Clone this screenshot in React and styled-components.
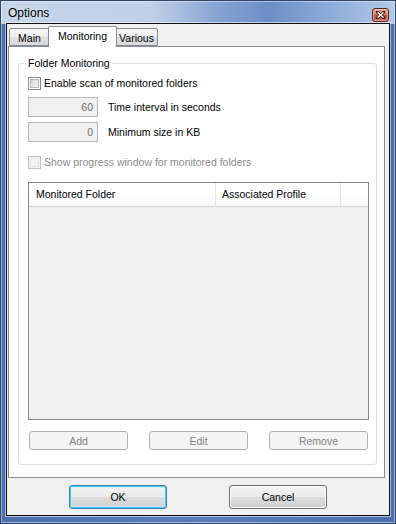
import React from 'react';
import styled, { createGlobalStyle } from 'styled-components';

const GlobalStyle = createGlobalStyle`
  html, body { margin: 0; padding: 0; background: #ffffff; }
  body { font-family: "Liberation Sans", Arial, sans-serif; font-size: 10.5px; color: #000; }
  *, *::before, *::after { box-sizing: border-box; }
`;

const Window = styled.div`
  width: 396px;
  height: 524px;
  display: flex;
  flex-direction: column;
  border: 1px solid #2f4466;
  padding: 0 5px 7px 5px;
  background:
    linear-gradient(90deg, #c4d3e8 0%, #c1d0e7 38%, #86a4d3 55%, #6b8ec6 68%, #8eaddb 84%, #b4c9e8 100%) top / 100% 23px no-repeat,
    linear-gradient(90deg, #4b70ae 0%, #5a7dba 50%, #4b70ae 100%);
  box-shadow: inset 0 0 0 1px rgba(255, 255, 255, 0.45);
`;

const TitleBar = styled.div`
  height: 22px;
  flex: none;
  display: flex;
  align-items: center;
  justify-content: space-between;
  padding: 1px 1px 0 2px;
`;

const Title = styled.span`
  font-size: 12px;
  color: #000;
  text-shadow: 0 0 6px rgba(255, 255, 255, 0.9);
`;

const CloseButton = styled.div`
  width: 17px;
  height: 14px;
  align-self: flex-start;
  margin-top: 6px;
  border: 1px solid #5a2318;
  border-radius: 3px;
  background: linear-gradient(to bottom, #e9a99a 0%, #d47f6c 45%, #c24a32 55%, #d0725b 100%);
  box-shadow: inset 0 0 0 1px rgba(255, 220, 210, 0.45);
  display: flex;
  align-items: center;
  justify-content: center;
`;

const Client = styled.div`
  flex: 1;
  display: flex;
  flex-direction: column;
  border: 1px solid #101010;
  box-shadow: 0 0 0 1px rgba(255, 255, 255, 0.55);
  background: #f0f0f0;
`;

const TabStrip = styled.div`
  height: 22px;
  flex: none;
  display: flex;
  align-items: flex-end;
  padding: 2px 0 0 2px;
  position: relative;
  z-index: 1;
`;

const Tab = styled.div`
  width: ${p => p.$w}px;
  height: ${p => (p.$active ? 21 : 18)}px;
  margin-left: ${p => p.$ml || 0}px;
  margin-bottom: ${p => (p.$active ? -1 : 0)}px;
  border: 1px solid #898c95;
  border-bottom: ${p => (p.$active ? 'none' : '1px solid #898c95')};
  border-radius: 2px 2px 0 0;
  background: ${p => (p.$active ? '#ffffff' : 'linear-gradient(to bottom, #f4f4f4 0%, #ececec 50%, #e1e1e1 51%, #d9d9d9 100%)')};
  display: flex;
  justify-content: center;
  padding-top: 3px;
  font-size: 10.5px;
  line-height: 12px;
  color: #000;
  position: relative;
  z-index: ${p => (p.$active ? 2 : 1)};
`;

const Panel = styled.div`
  height: 432px;
  flex: none;
  margin: 0 4px 0 1px;
  border: 1px solid #898c95;
  background: #ffffff;
  display: flex;
  flex-direction: column;
`;

const Group = styled.fieldset`
  margin: 10px 7px 12px 9px;
  padding: 0 7px 0 9px;
  flex: 1;
  border: 1px solid #d5dfe5;
  border-radius: 3px;
  display: flex;
  flex-direction: column;
  min-width: 0;
`;

const Legend = styled.legend`
  padding: 0 2px;
  margin-left: -2px;
  font-size: 10.5px;
  line-height: 13px;
  color: #000;
`;

const CheckRow = styled.label`
  display: flex;
  align-items: center;
  gap: 3px;
  height: 13px;
  margin-top: ${p => p.$mt}px;
  color: ${p => (p.$disabled ? '#8d8d8d' : '#000')};
  line-height: 13px;
`;

const CheckBox = styled.span`
  width: 13px;
  height: 13px;
  flex: none;
  border: 1px solid ${p => (p.$disabled ? '#c4c4c4' : '#8e8f8f')};
  background: ${p => (p.$disabled ? '#f4f4f4' : '#ffffff')};
  padding: 1px;
  display: block;
  &::after {
    content: '';
    display: block;
    width: 100%;
    height: 100%;
    border: 1px solid ${p => (p.$disabled ? '#e6e6e6' : '#b7b7b7')};
    background: ${p => (p.$disabled ? '#f4f4f4' : 'linear-gradient(135deg, #d3d3d3 0%, #e8e8e8 50%, #f8f8f8 100%)')};
  }
`;

const FieldRow = styled.div`
  display: flex;
  align-items: center;
  gap: 10px;
  height: 20px;
  margin-top: ${p => p.$mt}px;
`;

const NumberBox = styled.div`
  width: 70px;
  height: 20px;
  border: 1px solid #b5b8bb;
  background: #f0f0f0;
  color: #6d6d6d;
  text-align: right;
  padding: 0 4px 0 0;
  line-height: 18px;
`;

const FieldLabel = styled.span`
  color: #000;
`;

const ListView = styled.div`
  height: 238px;
  margin-top: 13px;
  border: 1px solid #828790;
  background: #f0f0f0;
  display: flex;
  flex-direction: column;
`;

const Header = styled.div`
  height: 24px;
  display: flex;
  background: linear-gradient(to bottom, #ffffff 0%, #ffffff 40%, #f7f8fa 100%);
  border-bottom: 1px solid #d5d5d5;
`;

const HeaderCell = styled.div`
  width: ${p => p.$w}px;
  flex: ${p => (p.$w ? 'none' : '1')};
  border-right: ${p => (p.$w ? '1px solid #e3e4e6' : 'none')};
  padding-left: ${p => p.$pl || 0}px;
  padding-bottom: 1px;
  display: flex;
  align-items: center;
  font-size: 10.5px;
  color: #000;
`;

const ButtonRow = styled.div`
  display: flex;
  justify-content: space-between;
  margin-top: 11px;
  padding: 0 1px;
`;

const SmallButton = styled.div`
  width: 99px;
  height: 19px;
  border: 1px solid #adb2b5;
  border-radius: 3px;
  background: #f4f4f4;
  color: #838383;
  display: flex;
  align-items: center;
  justify-content: center;
`;

const DialogButtons = styled.div`
  display: flex;
  gap: 62px;
  padding: 7px 0 0 62px;
`;

const DialogButton = styled.div`
  width: 98px;
  height: 24px;
  border: 1px solid ${p => (p.$default ? '#3c7fb1' : '#707070')};
  border-radius: 3px;
  background: linear-gradient(to bottom, #f2f2f2 0%, #ebebeb 50%, #dddddd 51%, #cfcfcf 100%);
  box-shadow: ${p => (p.$default ? 'inset 0 0 0 1px #48c9f7, inset 0 0 0 2px rgba(200,240,255,0.6)' : 'inset 0 0 0 1px rgba(255,255,255,0.8)')};
  color: #000;
  display: flex;
  align-items: center;
  justify-content: center;
  font-size: 10.5px;
`;

export default function App() {
  return (
    <>
      <GlobalStyle />
      <Window>
        <TitleBar>
          <Title>Options</Title>
          <CloseButton>
            <svg width="9" height="8" viewBox="0 0 9 8">
              <path d="M1 1 L8 7 M8 1 L1 7" stroke="#3a1a14" strokeWidth="3" strokeLinecap="square" />
              <path d="M1.5 1.5 L7.5 6.5 M7.5 1.5 L1.5 6.5" stroke="#ffffff" strokeWidth="1.6" />
            </svg>
          </CloseButton>
        </TitleBar>
        <Client>
          <TabStrip>
            <Tab $w={41}>Main</Tab>
            <Tab $w={69} $ml={-2} $active>Monitoring</Tab>
            <Tab $w={43} $ml={-2}>Various</Tab>
          </TabStrip>
          <Panel>
            <Group>
              <Legend>Folder Monitoring</Legend>
              <CheckRow $mt={7}>
                <CheckBox />
                Enable scan of monitored folders
              </CheckRow>
              <FieldRow $mt={7}>
                <NumberBox>60</NumberBox>
                <FieldLabel>Time interval in seconds</FieldLabel>
              </FieldRow>
              <FieldRow $mt={5}>
                <NumberBox>0</NumberBox>
                <FieldLabel>Minimum size in KB</FieldLabel>
              </FieldRow>
              <CheckRow $mt={14} $disabled>
                <CheckBox $disabled />
                Show progress window for monitored folders
              </CheckRow>
              <ListView>
                <Header>
                  <HeaderCell $w={187} $pl={7}>Monitored Folder</HeaderCell>
                  <HeaderCell $w={125} $pl={6}>Associated Profile</HeaderCell>
                  <HeaderCell />
                </Header>
              </ListView>
              <ButtonRow>
                <SmallButton>Add</SmallButton>
                <SmallButton>Edit</SmallButton>
                <SmallButton>Remove</SmallButton>
              </ButtonRow>
            </Group>
          </Panel>
          <DialogButtons>
            <DialogButton $default>OK</DialogButton>
            <DialogButton>Cancel</DialogButton>
          </DialogButtons>
        </Client>
      </Window>
    </>
  );
}
